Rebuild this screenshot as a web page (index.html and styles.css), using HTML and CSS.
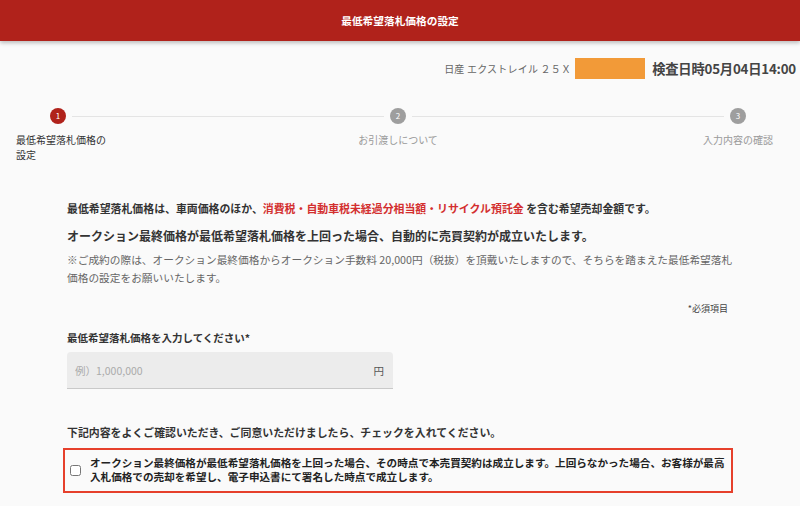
FILE: index.html
```html
<!DOCTYPE html>
<html lang="ja">
<head>
    <meta charset="UTF-8">
    <meta name="viewport" content="width=device-width, initial-scale=1.0">
    <title>最低希望落札価格の設定</title>
    <link rel="stylesheet" href="styles.css">
</head>
<body>
    <header class="app-bar">最低希望落札価格の設定</header>

    <div class="car-info">
        <span class="car-name">日産 エクストレイル ２５Ｘ</span>
        <span class="car-mask"></span>
        <span class="car-date">検査日時05月04日14:00</span>
    </div>

    <div class="stepper">
        <div class="step active">
            <div class="step-circle">1</div>
            <div class="step-label">最低希望落札価格の設定</div>
        </div>
        <div class="step-line"></div>
        <div class="step">
            <div class="step-circle">2</div>
            <div class="step-label">お引渡しについて</div>
        </div>
        <div class="step-line"></div>
        <div class="step">
            <div class="step-circle">3</div>
            <div class="step-label">入力内容の確認</div>
        </div>
    </div>

    <main class="content">
        <p class="lead">最低希望落札価格は、車両価格のほか、<span class="accent">消費税・自動車税未経過分相当額・リサイクル預託金</span> を含む希望売却金額です。</p>
        <p class="lead-big">オークション最終価格が最低希望落札価格を上回った場合、自動的に売買契約が成立いたします。</p>
        <p class="note">※ご成約の際は、オークション最終価格からオークション手数料 20,000円（税抜）を頂戴いたしますので、そちらを踏まえた最低希望落札価格の設定をお願いいたします。</p>
        <p class="required">*必須項目</p>

        <label class="field-label" for="price">最低希望落札価格を入力してください*</label>
        <div class="field">
            <input id="price" type="text" placeholder="例）1,000,000">
            <span class="unit">円</span>
        </div>

        <p class="confirm">下記内容をよくご確認いただき、ご同意いただけましたら、チェックを入れてください。</p>
        <label class="agree">
            <input type="checkbox">
            <span>オークション最終価格が最低希望落札価格を上回った場合、その時点で本売買契約は成立します。上回らなかった場合、お客様が最高入札価格での売却を希望し、電子申込書にて署名した時点で成立します。</span>
        </label>
    </main>
</body>
</html>
```

FILE: styles.css
```css
body {
    margin: 0;
    background-color: #fafafa;
    font-family: "Noto Sans CJK JP", "Noto Sans", sans-serif;
    color: #333;
}
.app-bar {
    height: 41px;
    line-height: 41px;
    background-color: #b0221b;
    color: #ffffff;
    text-align: center;
    font-size: 10.7px;
    font-weight: bold;
    box-shadow: 0 2px 4px rgba(0, 0, 0, 0.25);
}
.car-info {
    display: flex;
    justify-content: flex-end;
    align-items: center;
    margin-top: 17px;
    padding-right: 4px;
    height: 21px;
}
.car-name {
    font-size: 10px;
    letter-spacing: 0.2px;
    color: #666;
}
.car-mask {
    width: 70px;
    height: 21px;
    margin: 0 7px 0 4px;
    background-color: #f29a38;
}
.car-date {
    font-size: 13.3px;
    font-weight: bold;
    color: #444;
    letter-spacing: -0.2px;
}
.stepper {
    display: flex;
    padding: 0 20px 0 16px;
    margin-top: 29px;
}
.step {
    width: 84px;
    display: flex;
    flex-direction: column;
    align-items: center;
    position: relative;
    z-index: 1;
}
.step-circle {
    width: 16px;
    height: 16px;
    border-radius: 50%;
    background-color: #9e9e9e;
    color: #fff;
    font-size: 8px;
    line-height: 16px;
    text-align: center;
}
.step.active .step-circle {
    background-color: #b0221b;
}
.step-label {
    margin-top: 8px;
    font-size: 10px;
    line-height: 15px;
    color: #999;
    text-align: center;
    white-space: nowrap;
}
.step.active .step-label {
    align-self: flex-start;
    width: 92px;
    color: #333;
    text-align: left;
    white-space: normal;
}
.step-line {
    flex: 1;
    height: 1px;
    margin: 8px -28px 0;
    background-color: #e4e4e4;
}
.content {
    margin: 0 67px;
    padding-top: 37px;
}
.content p {
    margin: 0;
}
.lead {
    font-size: 10.9px;
    font-weight: bold;
    line-height: 18px;
}
.accent {
    color: #d32f2f;
}
.lead-big {
    margin-top: 10px !important;
    font-size: 12px;
    font-weight: bold;
    line-height: 18px;
}
.note {
    margin-top: 6px !important;
    font-size: 10.7px;
    line-height: 18px;
    color: #666;
}
.required {
    margin-top: 15px !important;
    text-align: right;
    padding-right: 5px;
    font-size: 9px;
    line-height: 14px;
    color: #444;
}
.field-label {
    display: block;
    margin-top: 14px;
    font-size: 10.5px;
    font-weight: bold;
    line-height: 16px;
}
.field {
    display: flex;
    align-items: center;
    width: 326px;
    height: 37px;
    margin-top: 6px;
    background-color: #ececec;
    border-bottom: 1px solid #c9c9c9;
    border-radius: 4px 4px 0 0;
    box-sizing: border-box;
}
.field input {
    flex: 1;
    border: none;
    background: transparent;
    padding: 0 0 0 8px;
    font-family: inherit;
    font-size: 10.5px;
    color: #333;
    outline: none;
}
.field input::placeholder {
    color: #aaa;
}
.unit {
    padding-right: 9px;
    font-size: 10.5px;
    color: #555;
}
.confirm {
    margin-top: 35px !important;
    font-size: 10.9px;
    font-weight: bold;
    line-height: 16px;
}
.agree {
    display: flex;
    align-items: center;
    margin: 8px 0 0 -4px;
    padding: 6px 6px 7px 5px;
    border: 2px solid #e6402c;
    font-size: 10.6px;
    font-weight: bold;
    line-height: 14px;
    color: #222;
}
.agree input {
    width: 11px;
    height: 11px;
    margin: 0 9px 0 0;
    flex-shrink: 0;
}
```
